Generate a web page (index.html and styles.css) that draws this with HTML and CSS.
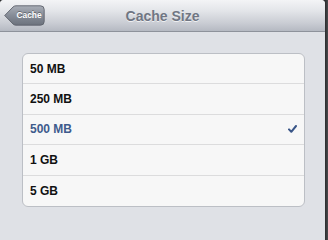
FILE: index.html
```html
<!DOCTYPE html>
<html>
<head>
<meta charset="utf-8">
<link rel="stylesheet" href="styles.css">
</head>
<body>
<div class="screen">
  <div class="app">
    <header class="navbar">
      <button class="back">
        <svg class="back-shape" width="41" height="21" viewBox="0 0 41 21" aria-hidden="true">
          <defs>
            <linearGradient id="bg" x1="0" y1="0" x2="0" y2="1">
              <stop offset="0" stop-color="#a9aeb7"/>
              <stop offset="0.5" stop-color="#868c97"/>
              <stop offset="1" stop-color="#6c727d"/>
            </linearGradient>
          </defs>
          <path d="M0.7 10.5 L9 2 Q10.2 0.8 12 0.8 H36.5 Q40.2 0.8 40.2 4.5 V16.5 Q40.2 20.2 36.5 20.2 H12 Q10.2 20.2 9 19 Z" fill="url(#bg)" stroke="#5d626c" stroke-width="0.9"/>
        </svg>
        <span class="back-label">Cache</span>
      </button>
      <h1 class="title">Cache Size</h1>
    </header>
    <main class="content">
      <ul class="group">
        <li class="row">50 MB</li>
        <li class="row">250 MB</li>
        <li class="row selected">500 MB
          <svg class="check" width="9" height="8" viewBox="0 0 9 8" aria-hidden="true">
            <path d="M1 4.4 L3.3 6.8 L8 1" fill="none" stroke="#3a5688" stroke-width="2" stroke-linejoin="round" stroke-linecap="round"/>
          </svg>
        </li>
        <li class="row">1 GB</li>
        <li class="row">5 GB</li>
      </ul>
    </main>
  </div>
  <div class="edge"></div>
</div>
</body>
</html>
```

FILE: styles.css
```css
* { box-sizing: border-box; }
html, body { margin: 0; padding: 0; }
html { background: #dfe1e6; }
body {
  width: 328px;
  min-height: 208px;
  background: #2e2f31;
  font-family: "Liberation Sans", Arial, sans-serif;
}
.screen {
  display: flex;
  width: 328px;
  min-height: 100vh;
}
.app {
  width: 325px;
  min-height: 100vh;
  background: #dfe1e6;
  border-radius: 4px 4px 0 0;
  overflow: hidden;
  display: flex;
  flex-direction: column;
}
.edge {
  width: 3px;
  background: linear-gradient(to right, #2a2b2d, #4a4b4e);
}
.navbar {
  position: relative;
  height: 32px;
  flex: none;
  display: flex;
  align-items: center;
  justify-content: center;
  background: linear-gradient(to bottom, #f3f4f6 0%, #e3e5e9 35%, #c9ccd3 75%, #b5b9c2 100%);
  border-bottom: 1px solid #8e929b;
}
.back {
  position: absolute;
  left: 4px;
  top: 5px;
  width: 41px;
  height: 21px;
  padding: 0 0 0 9px;
  margin: 0;
  border: 0;
  background: none;
  display: flex;
  align-items: center;
  justify-content: center;
}
.back-shape {
  position: absolute;
  left: 0;
  top: 0;
}
.back-label {
  position: relative;
  color: #fff;
  font-family: "Liberation Sans", Arial, sans-serif;
  font-weight: bold;
  font-size: 8.4px;
  text-shadow: 0 -1px 0 rgba(0,0,0,0.35);
  line-height: 1;
}
.title {
  margin: 0;
  font-size: 14px;
  font-weight: bold;
  color: #707683;
  text-shadow: 0 1px 0 rgba(255,255,255,0.7);
  line-height: 1;
}
.content {
  padding: 21px 20px 0 22px;
}
.group {
  list-style: none;
  margin: 0;
  padding: 0;
  background: #f7f7f7;
  border: 1px solid #bcbfc5;
  border-radius: 6px;
}
.row {
  height: 30.4px;
  display: flex;
  align-items: center;
  justify-content: space-between;
  padding: 0 7px 0 7px;
  font-size: 12px;
  font-weight: bold;
  color: #111;
  border-bottom: 1px solid #dcdcdd;
}
.row:last-child { border-bottom: 0; }
.row.selected { color: #3e5b8c; }
.check { display: block; }
```
